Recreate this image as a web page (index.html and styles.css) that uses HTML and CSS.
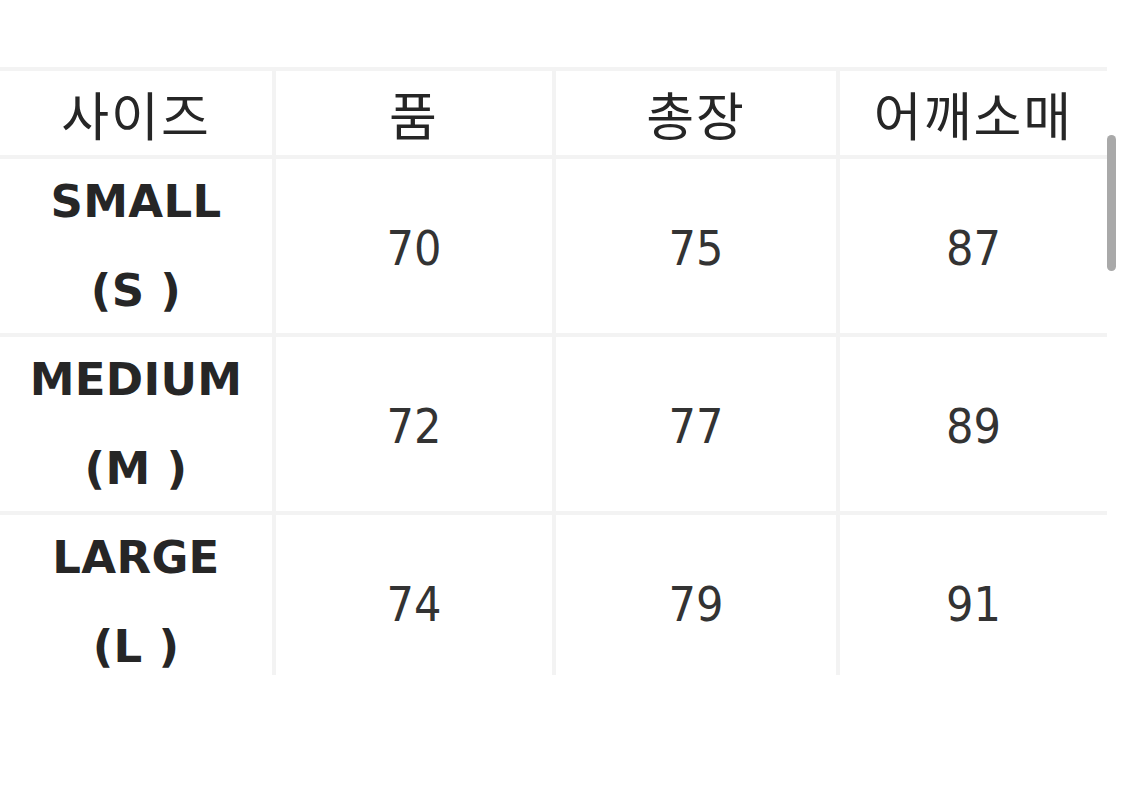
FILE: index.html
```html
<!DOCTYPE html>
<html lang="ko">
<head>
<meta charset="utf-8">
<title>사이즈표</title>
<link rel="stylesheet" href="styles.css">
</head>
<body>
<div class="frame">
  <div class="size-table">
    <div class="cell head">사이즈</div>
    <div class="cell head">품</div>
    <div class="cell head">총장</div>
    <div class="cell head">어깨소매</div>

    <div class="cell size">SMALL<br>(S )</div>
    <div class="cell num">70</div>
    <div class="cell num">75</div>
    <div class="cell num">87</div>

    <div class="cell size">MEDIUM<br>(M )</div>
    <div class="cell num">72</div>
    <div class="cell num">77</div>
    <div class="cell num">89</div>

    <div class="cell size">LARGE<br>(L )</div>
    <div class="cell num">74</div>
    <div class="cell num">79</div>
    <div class="cell num">91</div>
  </div>
</div>
<div class="scrollbar"></div>
</body>
</html>
```
FILE: styles.css
```css
html, body {
  margin: 0;
  padding: 0;
  background: #ffffff;
}

body {
  width: 1125px;
  height: 791px;
  overflow: hidden;
}

.frame {
  margin-top: 67px;
  width: 1107px;
  height: 608px;
  overflow: hidden;
}

.size-table {
  display: grid;
  grid-template-columns: 272px 276px 280px 267px;
  grid-template-rows: 84px 174px 174px 174px;
  gap: 4px;
  padding-top: 4px;
  background: #f3f3f3;
  width: 1107px;
}

.cell {
  background: #ffffff;
  display: flex;
  align-items: center;
  justify-content: center;
  text-align: center;
}

.head {
  font-family: "Noto Sans CJK KR", "Noto Sans", sans-serif;
  font-size: 52px;
  font-weight: 400;
  letter-spacing: 2px;
  color: #262626;
  padding-top: 0;
}

.size {
  font-family: "DejaVu Sans", "Liberation Sans", sans-serif;
  font-weight: 700;
  font-size: 45px;
  line-height: 89px;
  color: #262626;
  letter-spacing: 0.3px;
}

.num {
  font-family: "DejaVu Sans Condensed", "DejaVu Sans", sans-serif;
  font-size: 48px;
  font-weight: 400;
  color: #333333;
  padding-top: 4px;
}

.scrollbar {
  position: fixed;
  left: 1107px;
  top: 135px;
  width: 9px;
  height: 136px;
  border-radius: 5px;
  background: #a9a9a9;
}
```
